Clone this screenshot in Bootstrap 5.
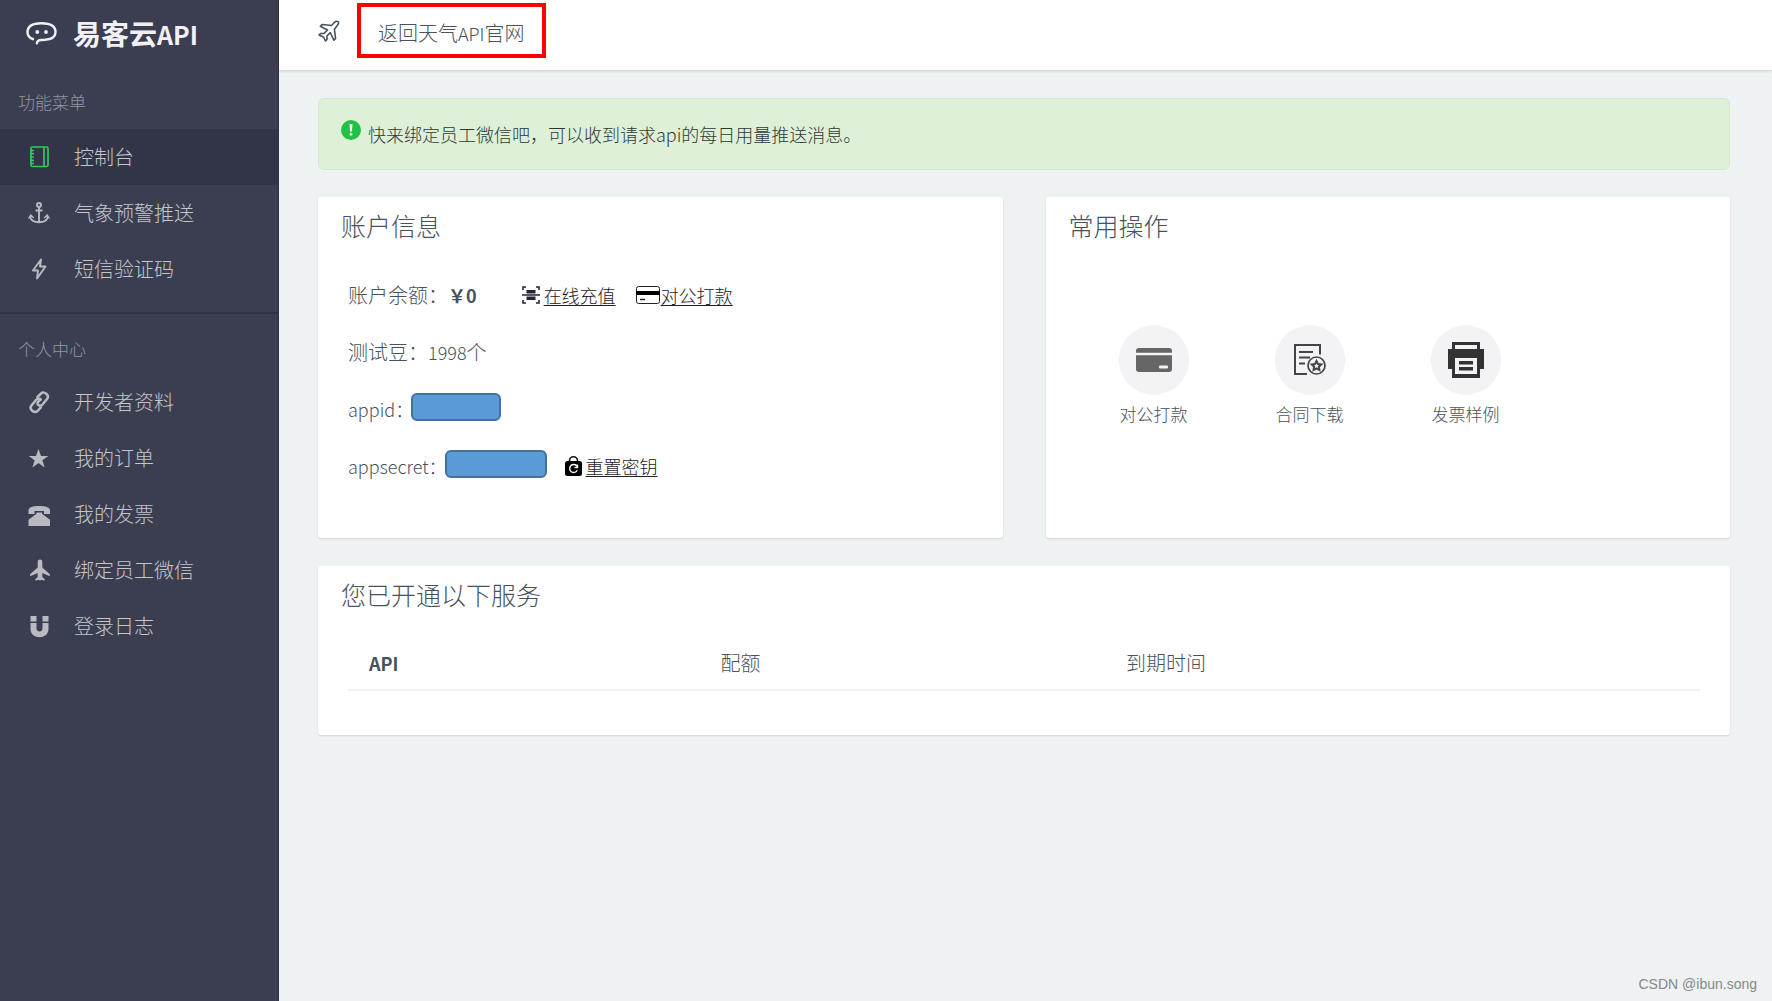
<!DOCTYPE html>
<html lang="zh-CN">
<head>
<meta charset="utf-8">
<meta name="viewport" content="width=device-width, initial-scale=1">
<title>易客云API</title>
<link href="https://cdn.jsdelivr.net/npm/bootstrap@5.3.0/dist/css/bootstrap.min.css" rel="stylesheet">
<style>
:root { --ink: #47525c; --panel-line: #eff2f4; }
body { font-family: "Noto Sans CJK SC", sans-serif; font-weight: 300; font-size: 20px; line-height: 30px; color: var(--ink); background: #eef2f3; }
a { color: inherit; text-decoration: none; }
.latin { font-size: 18px; }
.side { width: 279px; background: #3b3e50; color: #c4c6cc; border-right: 1px solid #2f3243; }
.brand { height: 70px; padding: 0 0 4px 26px; gap: 16px; color: #f1f1f3; font-size: 28px; font-weight: 700; }
.brand .latin { font-size: 25px; }
.side-label { font-size: 17px; color: #9194a0; height: 59px; padding: 4px 0 0 18px; }
.side-item { height: 56px; padding-left: 25px; gap: 21px; }
.side-item svg { width: 28px; height: 24px; color: #b9bbc2; }
.side-item.current { background: #323548; }
.side-item.current svg { color: #33c95b; }
.side-item:hover { background: #323548; }
.side-rule { height: 2px; background: #2f3243; margin: 15px 0 1px; }
.topbar { height: 70px; background: #fff; padding-left: 39px; gap: 17px; box-shadow: 0 1px 3px rgba(0,0,0,.16); }
.home-link { border: 4px solid #f00; padding: 11px 17px 6px; margin-bottom: 9px; }
.content-area { padding: 28px 42px 28px 39px; }
.notice { background: #dff0d8; border: 1px solid #d0e9c6; border-radius: 6px; padding: 20px 22px; color: #2c3a35; font-size: 18px; gap: 7px; margin-bottom: 27px; }
.panel { background: #fff; border-radius: 3px; box-shadow: 0 1px 2px rgba(0,0,0,.12); padding: 12px 30px 44px; }
.panel h2 { font-size: 25px; line-height: 32px; font-weight: 300; margin: 0 0 25px -7px; }
.panels { --bs-gutter-x: 43px; margin-bottom: 28px; }
.info-row { height: 57px; }
.act { font-size: 18px; color: #1d2126; text-decoration: underline; text-underline-offset: 2px; margin-left: 4px; }
.act-scan { margin-left: 45px; }
.act-card { margin-left: 20px; }
.act-card + .act { margin-left: 1px; }
.act-lock { margin-left: 18px; }
.mask { background: #5b9bd5; border: 2px solid #41719c; border-radius: 6px; height: 28px; margin: 0 0 4px -2px; }
.mask-id { width: 90px; }
.mask-key { width: 102px; }
.ops { padding: 59px 0 0 43px; gap: 86px; }
.op { width: 70px; font-size: 17px; white-space: nowrap; }
.disc { width: 70px; height: 70px; border-radius: 50%; background: #f3f3f6; margin-bottom: 4px; }
.services { margin: 0; --bs-table-bg: transparent; color: inherit; }
.services th { font-weight: 300; padding: 13px 21px 11px; border-bottom: 2px solid var(--panel-line); color: var(--ink); }
.stamp { right: 15px; bottom: 7px; font: 14px/20px "Liberation Sans", sans-serif; color: #85898c; }
</style>
<script src="https://cdn.jsdelivr.net/npm/bootstrap@5.3.0/dist/js/bootstrap.bundle.min.js"></script>
</head>
<body>
<div class="d-flex min-vh-100 position-relative">
  <nav class="side flex-shrink-0" aria-label="主导航">
    <a class="brand d-flex align-items-center" href="#">
      <svg width="31" height="24" viewBox="0 0 31 24" fill="none" stroke="currentColor" stroke-width="2.4" stroke-linecap="round"><path d="M7 18.200C3.600 16.800 1.500 14.300 1.500 11.200 1.500 5 7 2.200 15.500 2.200s14 2.800 14 8.800-5.500 8-14 8c-2.800 0-4.400.9-4.600 3.400"/><g fill="currentColor" stroke="none"><circle cx="11.300" cy="11" r="1.900"/><circle cx="20" cy="11" r="1.900"/></g></svg>
      <span>易客云<span class="latin">API</span></span>
    </a>
    <div class="side-label d-flex align-items-center">功能菜单</div>
    <a class="side-item current d-flex align-items-center" href="#" aria-current="page">
      <svg viewBox="0 0 28 24" fill="none" stroke="currentColor" stroke-width="1.700"><rect x="6" y="2" width="17" height="19.500" rx="1.500"/><path d="M19 2v19.500M5 5.500h4M5 8.700h4M5 12h4M5 15.300h4M5 18.500h4"/></svg>控制台</a>
    <a class="side-item d-flex align-items-center" href="#">
      <svg viewBox="0 0 28 24" fill="none" stroke="currentColor" stroke-width="1.900"><circle cx="14" cy="4" r="2"/><path d="M14 6v15M10.500 9.500h7M5 16c1 3.200 4.500 5.200 9 5.200s8-2 9-5.200"/><path d="M3.500 17.500L5.800 14l3 3M24.500 17.500L22.200 14l-3 3" stroke-width="1.300"/></svg>气象预警推送</a>
    <a class="side-item d-flex align-items-center" href="#">
      <svg viewBox="0 0 28 24" fill="none" stroke="currentColor" stroke-width="1.900" stroke-linejoin="round"><path d="M16 2.500L8 13.500h5L12 21.500l8.500-12h-5.500z"/></svg>短信验证码</a>
    <div class="side-rule"></div>
    <div class="side-label d-flex align-items-center pt-2">个人中心</div>
    <a class="side-item d-flex align-items-center" href="#">
      <svg viewBox="0 0 28 24" fill="none" stroke="currentColor" stroke-width="2.500" stroke-linecap="round"><path d="M12.500 7l3.500-3.500c3-2.700 9 1.700 6 5.500l-4.500 5.500c-1.300 1.500-3.500 1.500-4.500.3-.8-1-.4-2.300.6-3.400l2-2.200"/><path d="M15.800 17.500L12.500 21c-3 2.800-9-1.700-6-5.500L11 10c1.300-1.500 3.500-1.500 4.500-.3"/></svg>开发者资料</a>
    <a class="side-item d-flex align-items-center" href="#">
      <svg viewBox="0 0 28 24" fill="currentColor"><path d="M13.500 3l2.500 7h7.300l-5.900 4.300 2.200 7.200-6.100-4.400-6.100 4.400 2.200-7.200L3.700 10H11z"/></svg>我的订单</a>
    <a class="side-item d-flex align-items-center" href="#">
      <svg viewBox="0 0 28 24" fill="currentColor"><path d="M3.500 12V8.500c0-3 4-4.500 10.700-4.500S25 5.500 25 8.500V12h-6V9H9.500v3z"/><path d="M11.500 10.500h5.500v1.200l8 6V24H3.500v-6.300l8-6z"/></svg>我的发票</a>
    <a class="side-item d-flex align-items-center" href="#">
      <svg viewBox="0 0 28 24" fill="currentColor"><path d="M12.700 4c0-3.200 4.600-3.200 4.600 0v5.500l7.500 6.800v2L17.300 15v4l2.500 2.200V22.500l-4-.8-.8 1.300-.8-1.300-4 .8v-1.300l2.500-2.200v-4l-7.600 3.300v-2l7.600-6.800z"/></svg>绑定员工微信</a>
    <a class="side-item d-flex align-items-center" href="#">
      <svg viewBox="0 0 28 24" fill="currentColor"><path d="M5.500 2h6v5.500h-6zM17.500 2h6v5.500h-6zM5.500 9h6v5.500c0 4 6 4 6 0V9h6v6c0 11-18 11-18 0z"/></svg>登录日志</a>
  </nav>
  <div class="flex-grow-1">
    <header class="topbar d-flex align-items-center">
      <svg class="mb-2" width="22" height="24" viewBox="0 0 22 24" fill="none" stroke="currentColor" stroke-width="1.600" stroke-linejoin="round"><path d="M20.300 2.800c-1.300-1.300-3.300 0-4.300 1l-2.500 2.700L4 5.500 2.300 7.200 9.500 11 6 14.500H2.500L1 16l4.500 2 2 4 1.500-1.500V17l3.300-3.500 3.500 7.700 1.800-1.600-1.200-9.300 2.500-3.300c1-1.200 2.500-3 1.400-4.200z"/></svg>
      <a class="home-link" href="#">返回天气<span class="latin">API</span>官网</a>
    </header>
    <main class="content-area">
      <div class="notice d-flex" role="alert">
        <svg width="20" height="24" viewBox="0 0 20 24"><circle cx="10" cy="11" r="10" fill="#22c146"/><path d="M8.600 5h2.800L11 12.500H9z" fill="#fff"/><circle cx="10" cy="15.300" r="1.400" fill="#fff"/></svg>
        <span>快来绑定员工微信吧，可以收到请求api的每日用量推送消息。</span>
      </div>
      <div class="row panels">
        <div class="col-6">
          <section class="panel h-100">
            <h2>账户信息</h2>
            <div class="info-row d-flex align-items-center">账户余额：<strong class="latin fw-bold">￥0</strong>
              <svg class="act-scan" width="18" height="18" viewBox="0 0 18 18" fill="none" stroke="#222533" stroke-width="1.600"><path d="M1 4V1h3M14 1h3v3M17 14v3h-3M4 17H1v-3M0 9h18"/><path d="M4.500 4h9v3.500h-9zM4.500 10.500h9V14h-9z" fill="#222533" stroke="none"/></svg>
              <a class="act" href="#">在线充值</a>
              <svg class="act-card" width="24" height="18" viewBox="0 0 24 18" fill="none" stroke="#222" stroke-width="1"><rect x=".5" y=".5" width="23" height="17" rx="2"/><path d="M0 7h24" stroke="#000" stroke-width="4"/><path d="M4 13.500h5" stroke-width="1.500"/></svg>
              <a class="act" href="#">对公打款</a>
            </div>
            <div class="info-row d-flex align-items-center">测试豆：<span class="latin">1998</span>个</div>
            <div class="info-row d-flex align-items-center"><span class="latin">appid：</span><span class="mask mask-id"></span></div>
            <div class="info-row d-flex align-items-center"><span class="latin">appsecret：</span><span class="mask mask-key"></span>
              <svg class="act-lock" width="17" height="20" viewBox="0 0 17 20"><path d="M4.500 6V4.500a4 3.700 0 0 1 8 0V6" fill="none" stroke="#111" stroke-width="1.600"/><rect y="5" width="17" height="15" rx="2.500"/><path d="M12 10.200a4 4 0 1 0 .3 4M12.500 8.500v3h-3" fill="none" stroke="#fff" stroke-width="1.400"/></svg>
              <a class="act" href="#">重置密钥</a>
            </div>
          </section>
        </div>
        <div class="col-6">
          <section class="panel h-100">
            <h2>常用操作</h2>
            <div class="ops d-flex">
              <a class="op text-center" href="#"><span class="disc d-flex align-items-center justify-content-center"><svg width="36" height="24" viewBox="0 0 36 24"><rect width="36" height="24" rx="3" fill="#666"/><path d="M0 6h36" stroke="#f3f3f6" stroke-width="2.500"/><rect x="23" y="17.500" width="9" height="3" rx="1" fill="#f3f3f6"/></svg></span>对公打款</a>
              <a class="op text-center" href="#"><span class="disc d-flex align-items-center justify-content-center"><svg width="32" height="32" viewBox="0 0 32 32" fill="none" stroke="#444" stroke-width="2"><path d="M26 10.500V1H1v29h12M5 8h14M5 13.500h11M5 19.500h6"/><circle cx="22.500" cy="21.500" r="8.500" stroke-width="1.700"/><path d="M22.500 17l1.500 3 3.200.4-2.300 2.300.5 3.200-2.900-1.500-2.900 1.500.5-3.200-2.300-2.300 3.200-.4z"/></svg></span>合同下载</a>
              <a class="op text-center" href="#"><span class="disc d-flex align-items-center justify-content-center"><svg width="36" height="36" viewBox="0 0 36 36" fill="#333"><path d="M4 0h28v7h4v20h-4v9H4v-9H0V7h4zM7 3v4h22V3zM7 16v16h22V16z" fill-rule="evenodd"/><path d="M11 19h14v3.500H11zM11 25h14v3.500H11z"/></svg></span>发票样例</a>
            </div>
          </section>
        </div>
      </div>
      <section class="panel services-panel">
        <h2>您已开通以下服务</h2>
        <table class="table services">
          <colgroup><col style="width:26%"><col style="width:30%"><col style="width:44%"></colgroup>
          <thead><tr><th scope="col"><span class="latin fw-bold">API</span></th><th scope="col">配额</th><th scope="col">到期时间</th></tr></thead>
        </table>
      </section>
    </main>
  </div>
  <div class="stamp position-absolute">CSDN @ibun.song</div>
</div>
</body>
</html>
